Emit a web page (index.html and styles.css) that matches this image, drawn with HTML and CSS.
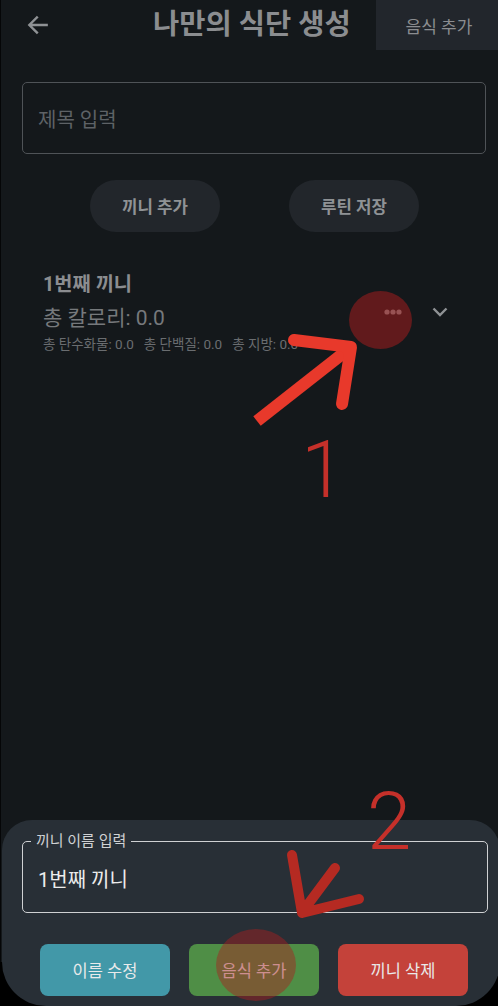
FILE: index.html
```html
<!DOCTYPE html>
<html lang="ko">
<head>
<meta charset="utf-8">
<title>나만의 식단 생성</title>
<link rel="stylesheet" href="styles.css">
</head>
<body>
<div class="screen">
  <div class="app">
    <header class="header">
      <div class="back">
        <svg width="26" height="26" viewBox="0 0 24 24"><path d="M20 12H4.5M11 5l-7 7 7 7" fill="none" stroke="#8f9295" stroke-width="2.2" stroke-linecap="square"/></svg>
      </div>
      <h1 class="title">나만의 식단 생성</h1>
      <div class="header-btn">음식 추가</div>
    </header>

    <div class="title-input">제목 입력</div>

    <div class="actions">
      <div class="pill">끼니 추가</div>
      <div class="pill">루틴 저장</div>
    </div>

    <div class="meal">
      <div class="meal-info">
        <div class="meal-name">1번째 끼니</div>
        <div class="meal-kcal">총 칼로리: 0.0</div>
        <div class="meal-macros">
          <span>총 탄수화물: 0.0</span>
          <span>총 단백질: 0.0</span>
          <span>총 지방: 0.0</span>
        </div>
      </div>
      <div class="meal-tools">
        <svg class="dots" width="24" height="20" viewBox="0 0 24 20"><circle cx="6" cy="10" r="2.6" fill="#8f9295"/><circle cx="12" cy="10" r="2.6" fill="#8f9295"/><circle cx="18" cy="10" r="2.6" fill="#8f9295"/></svg>
        <svg class="chev" width="20" height="20" viewBox="0 0 20 20"><path d="M3.5 6.5l6.5 6.5 6.5-6.5" fill="none" stroke="#8f9295" stroke-width="2.4"/></svg>
      </div>
    </div>
  </div>

  <div class="sheet">
    <div class="field">
      <span class="field-label">끼니 이름 입력</span>
      <span class="field-value">1번째 끼니</span>
    </div>
    <div class="sheet-buttons">
      <div class="btn btn-teal">이름 수정</div>
      <div class="btn btn-green">음식 추가</div>
      <div class="btn btn-red">끼니 삭제</div>
    </div>
  </div>

  <svg class="marks" width="498" height="1006" viewBox="0 0 498 1006">
    <ellipse cx="380.5" cy="320" rx="31.5" ry="29" fill="rgba(160,30,30,0.55)"/>
    <path d="M257 421L350 348" stroke="#e8392b" stroke-width="12" fill="none"/>
    <path d="M294 340L351 347L342 404" stroke="#e8392b" stroke-width="12" fill="none" stroke-linecap="round" stroke-linejoin="round"/>
    <ellipse cx="256" cy="965" rx="40" ry="36" fill="rgba(170,30,30,0.45)"/>
    <path d="M292 855L302 913L359 899M309 903L335 868" stroke="#b52a22" stroke-width="10" fill="none" stroke-linecap="round" stroke-linejoin="round"/>
  </svg>
  <div class="num num-1">1</div>
  <div class="num num-2">2</div>
</div>
</body>
</html>
```
FILE: styles.css
```css
* { box-sizing: border-box; }
html, body { margin: 0; padding: 0; background: #000; }
body { font-family: Roboto, "Noto Sans CJK KR", "Noto Sans", sans-serif; }

.screen {
  position: relative;
  width: 498px;
  height: 1006px;
  overflow: hidden;
  background: #000;
}

.app {
  height: 962px;
  background: #14181b;
  border-left: 1px solid #050607;
}

.header {
  display: flex;
  align-items: center;
  height: 50px;
}
.back {
  width: 152px;
  padding-left: 24px;
  display: flex;
  align-items: center;
}
.title {
  margin: 0;
  font-size: 28.5px;
  font-weight: 700;
  color: #8b8d90;
  line-height: 50px;
}
.header-btn {
  margin-left: auto;
  width: 122px;
  height: 50px;
  background: #22262c;
  color: #8b8d90;
  font-size: 17px;
  display: flex;
  align-items: center;
  justify-content: center;
  padding-left: 4px;
}

.title-input {
  margin: 32px 12px 0 21px;
  height: 72px;
  border: 1.5px solid #4f5357;
  border-radius: 5px;
  padding-left: 15px;
  display: flex;
  align-items: center;
  font-size: 20px;
  color: #5e6266;
}

.actions {
  display: flex;
  gap: 69px;
  padding-left: 89px;
  margin-top: 26px;
}
.pill {
  width: 130px;
  height: 52px;
  border-radius: 26px;
  background: #22262b;
  color: #8f9295;
  font-size: 16.8px;
  font-weight: 700;
  display: flex;
  align-items: center;
  justify-content: center;
}

.meal {
  display: flex;
  justify-content: space-between;
  padding: 0 48px 0 42px;
  margin-top: 42px;
}
.meal-name {
  font-size: 19.8px;
  font-weight: 700;
  line-height: 22px;
  color: #8b8d90;
}
.meal-kcal {
  margin-top: 9px;
  font-size: 21px;
  line-height: 26px;
  color: #76797c;
}
.meal-macros {
  display: flex;
  gap: 10px;
  margin-top: 5px;
  font-size: 13.5px;
  line-height: 16px;
  color: #6a6d70;
  white-space: nowrap;
}
.meal-tools {
  display: flex;
  gap: 25px;
  margin-top: 28px;
  height: 20px;
}

.sheet {
  position: absolute;
  top: 820px;
  left: 2px;
  right: -2px;
  bottom: 0;
  background: #282f36;
  border-radius: 30px 30px 44px 44px;
  padding-top: 21px;
}
.field {
  position: relative;
  margin: 0 12px 0 20px;
  height: 72px;
  border: 1.5px solid #cfd1d3;
  border-radius: 5px;
  display: flex;
  align-items: center;
  padding-left: 15px;
}
.field-label {
  position: absolute;
  top: -10px;
  left: 8px;
  padding: 0 5px;
  background: #282f36;
  font-size: 15px;
  line-height: 18px;
  color: #d0d2d4;
}
.field-value {
  font-size: 20px;
  color: #ececec;
  margin-top: 2px;
}
.sheet-buttons {
  display: flex;
  gap: 19px;
  padding-left: 38px;
  margin-top: 31px;
}
.btn {
  width: 130px;
  height: 52px;
  border-radius: 8px;
  display: flex;
  align-items: center;
  justify-content: center;
  font-size: 16.5px;
  color: #e9eaeb;
}
.btn-teal { background: #4298a8; }
.btn-green { background: #4f8e46; }
.btn-red { background: #c4423a; }

.marks {
  position: absolute;
  top: 0;
  left: 0;
  pointer-events: none;
}
.num {
  position: absolute;
  font-family: Roboto, "Noto Sans", sans-serif;
  font-weight: 300;
  font-size: 80px;
  line-height: 80px;
  color: #c5302a;
}
.num-1 { top: 430px; left: 301px; }
.num-2 { top: 782px; left: 367px; }
```
